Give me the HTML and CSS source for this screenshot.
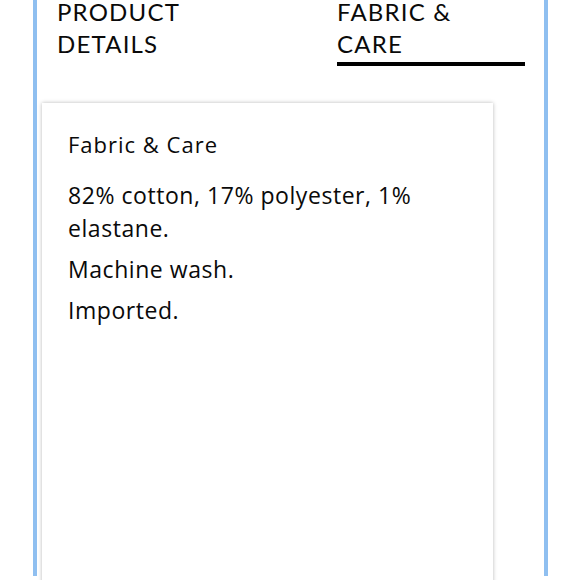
FILE: index.html
```html
<!DOCTYPE html>
<html lang="en">
<head>
<meta charset="utf-8">
<title>Product</title>
<link rel="stylesheet" href="styles.css">
</head>
<body>
<div class="frame">
  <div class="tabs">
    <div class="tab">PRODUCT<br>DETAILS</div>
    <div class="tab active">FABRIC &amp;<br>CARE</div>
  </div>
  <section class="panel">
    <h2 class="panel-title">Fabric &amp; Care</h2>
    <p class="panel-text">82% cotton, 17% polyester, 1% elastane.</p>
    <p class="panel-text">Machine wash.</p>
    <p class="panel-text">Imported.</p>
  </section>
</div>
</body>
</html>
```
FILE: styles.css
```css
html, body {
  margin: 0;
  padding: 0;
  background: #ffffff;
  height: 100%;
  overflow: hidden;
}

body {
  font-family: Lato, "Open Sans", sans-serif;
  color: #0a0a0a;
}

.frame {
  margin: 0 32px 0 33px;
  border-left: 4px solid #8fbff0;
  border-right: 4px solid #8fbff0;
  height: 100%;
  box-sizing: border-box;
}

.tabs {
  display: flex;
  justify-content: space-between;
  margin: -4px 19px 0 20px;
}

.tab {
  width: 188px;
  font-size: 24px;
  line-height: 32px;
  letter-spacing: 1.2px;
  padding-bottom: 2px;
  border-bottom: 4px solid transparent;
}

.tab.active {
  border-bottom-color: #000000;
}

.panel {
  margin: 37px 51px 0 5px;
  padding: 26px 26px;
  min-height: 600px;
  background: #ffffff;
  box-shadow: 0 0 4px rgba(0, 0, 0, 0.28);
  font-family: "Open Sans", Lato, sans-serif;
}

.panel-title {
  margin: 0 0 20px 0;
  font-size: 22px;
  line-height: 30px;
  font-weight: 400;
  letter-spacing: 1px;
}

.panel-text {
  margin: 0 0 8px 0;
  font-size: 23px;
  line-height: 33px;
  letter-spacing: 0.55px;
}
```
